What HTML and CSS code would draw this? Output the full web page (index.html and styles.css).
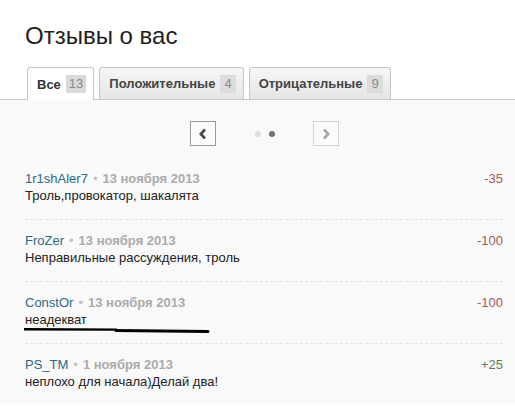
FILE: index.html
```
<!DOCTYPE html>
<html lang="ru">
<head>
<meta charset="utf-8">
<title>Отзывы о вас</title>
<link rel="stylesheet" href="styles.css">
</head>
<body>
<h1 class="title">Отзывы о вас</h1>
<div class="tabs">
  <div class="tab tab-active">Все<span class="count">13</span></div>
  <div class="tab">Положительные<span class="count">4</span></div>
  <div class="tab">Отрицательные<span class="count">9</span></div>
</div>
<div class="panel">
  <div class="pager">
    <div class="pbtn pbtn-on">
      <svg width="10" height="12" viewBox="0 0 10 12"><polyline points="7,1.5 2.8,6 7,10.5" fill="none" stroke="#4a4a4a" stroke-width="2.6"/></svg>
    </div>
    <div class="dots"><span class="dot"></span><span class="dot dot-on"></span></div>
    <div class="pbtn">
      <svg width="10" height="12" viewBox="0 0 10 12"><polyline points="3,1.5 7.2,6 3,10.5" fill="none" stroke="#a8a8a8" stroke-width="2.6"/></svg>
    </div>
  </div>
  <div class="item">
    <div class="body">
      <div class="meta"><span class="user">1r1shAler7</span><span class="sep">•</span><span class="date">13 ноября 2013</span></div>
      <div class="text">Троль,провокатор, шакалята</div>
    </div>
    <div class="score neg">-35</div>
  </div>
  <div class="item">
    <div class="body">
      <div class="meta"><span class="user">FroZer</span><span class="sep">•</span><span class="date">13 ноября 2013</span></div>
      <div class="text">Неправильные рассуждения, троль</div>
    </div>
    <div class="score neg">-100</div>
  </div>
  <div class="item item-marked">
    <div class="body">
      <div class="meta"><span class="user">ConstOr</span><span class="sep">•</span><span class="date">13 ноября 2013</span></div>
      <div class="text">неадекват</div>
    </div>
    <div class="score neg">-100</div>
    <svg class="scribble" width="200" height="8" viewBox="0 0 200 8"><path d="M0 2.2 L93 2.6" stroke="#000" stroke-width="2.4" fill="none"/><path d="M92 3.4 L184 4.4" stroke="#000" stroke-width="3" fill="none" stroke-linecap="round"/></svg>
  </div>
  <div class="item item-last">
    <div class="body">
      <div class="meta"><span class="user">PS_TM</span><span class="sep">•</span><span class="date">1 ноября 2013</span></div>
      <div class="text">неплохо для начала)Делай два!</div>
    </div>
    <div class="score pos">+25</div>
  </div>
</div>
</body>
</html>
```
FILE: styles.css
```
html, body {
  margin: 0;
  padding: 0;
  background: #ffffff;
}
body {
  font-family: "Liberation Sans", Arial, sans-serif;
  color: #222;
}
.title {
  margin: 22px 0 0 25px;
  font-size: 24px;
  line-height: 28px;
  font-weight: normal;
  color: #1e1e1e;
}
.tabs {
  display: flex;
  align-items: flex-end;
  gap: 5px;
  margin-top: 17px;
  padding-left: 27px;
  height: 32px;
  border-bottom: 1px solid #c9c9c9;
}
.tab {
  box-sizing: border-box;
  height: 32px;
  display: flex;
  align-items: center;
  padding: 0 7px 0 9px;
  border: 1px solid #c6c6c6;
  border-bottom: none;
  border-radius: 3px 3px 0 0;
  background: linear-gradient(#f6f6f6, #e5e5e5);
  font-size: 13px;
  font-weight: bold;
  color: #444;
}
.tab-active {
  height: 33px;
  margin-bottom: -1px;
  background: #ffffff;
  color: #333;
}
.count {
  margin-left: 5px;
  padding: 0 4px;
  line-height: 18px;
  background: #dcdcdc;
  color: #8a8a8a;
  font-weight: normal;
}
.tab-active .count {
  padding: 0 3px;
  background: #d9d9d9;
}
.panel {
  background: #f9f9f9;
  padding: 0 12px 0 25px;
}
.pager {
  display: flex;
  justify-content: center;
  align-items: center;
  padding: 21px 0 12px;
}
.pbtn {
  box-sizing: border-box;
  width: 26px;
  height: 25px;
  border: 1px solid #d2d2d2;
  display: flex;
  align-items: center;
  justify-content: center;
  background: #fbfbfb;
}
.pbtn-on {
  border-color: #9a9a9a;
}
.dots {
  display: flex;
  gap: 8px;
  margin: 0 38px 0 39px;
}
.dot {
  width: 6px;
  height: 6px;
  border-radius: 50%;
  background: #dedede;
}
.dot-on {
  background: #707070;
}
.item {
  position: relative;
  display: flex;
  justify-content: space-between;
  padding: 12px 0 15px;
  border-bottom: 1px dashed #e3e3e3;
  font-size: 13px;
  line-height: 17px;
}
.item-last {
  border-bottom: none;
}
.user {
  color: #2b6a86;
}
.sep {
  color: #c0c0c0;
  margin: 0 5px;
}
.date {
  color: #ababab;
  font-weight: bold;
}
.text {
  color: #222;
}
.score {
  font-size: 13px;
}
.neg {
  color: #a15a58;
}
.pos {
  color: #5d7d54;
}
.scribble {
  position: absolute;
  left: -1px;
  top: 45px;
}
```
